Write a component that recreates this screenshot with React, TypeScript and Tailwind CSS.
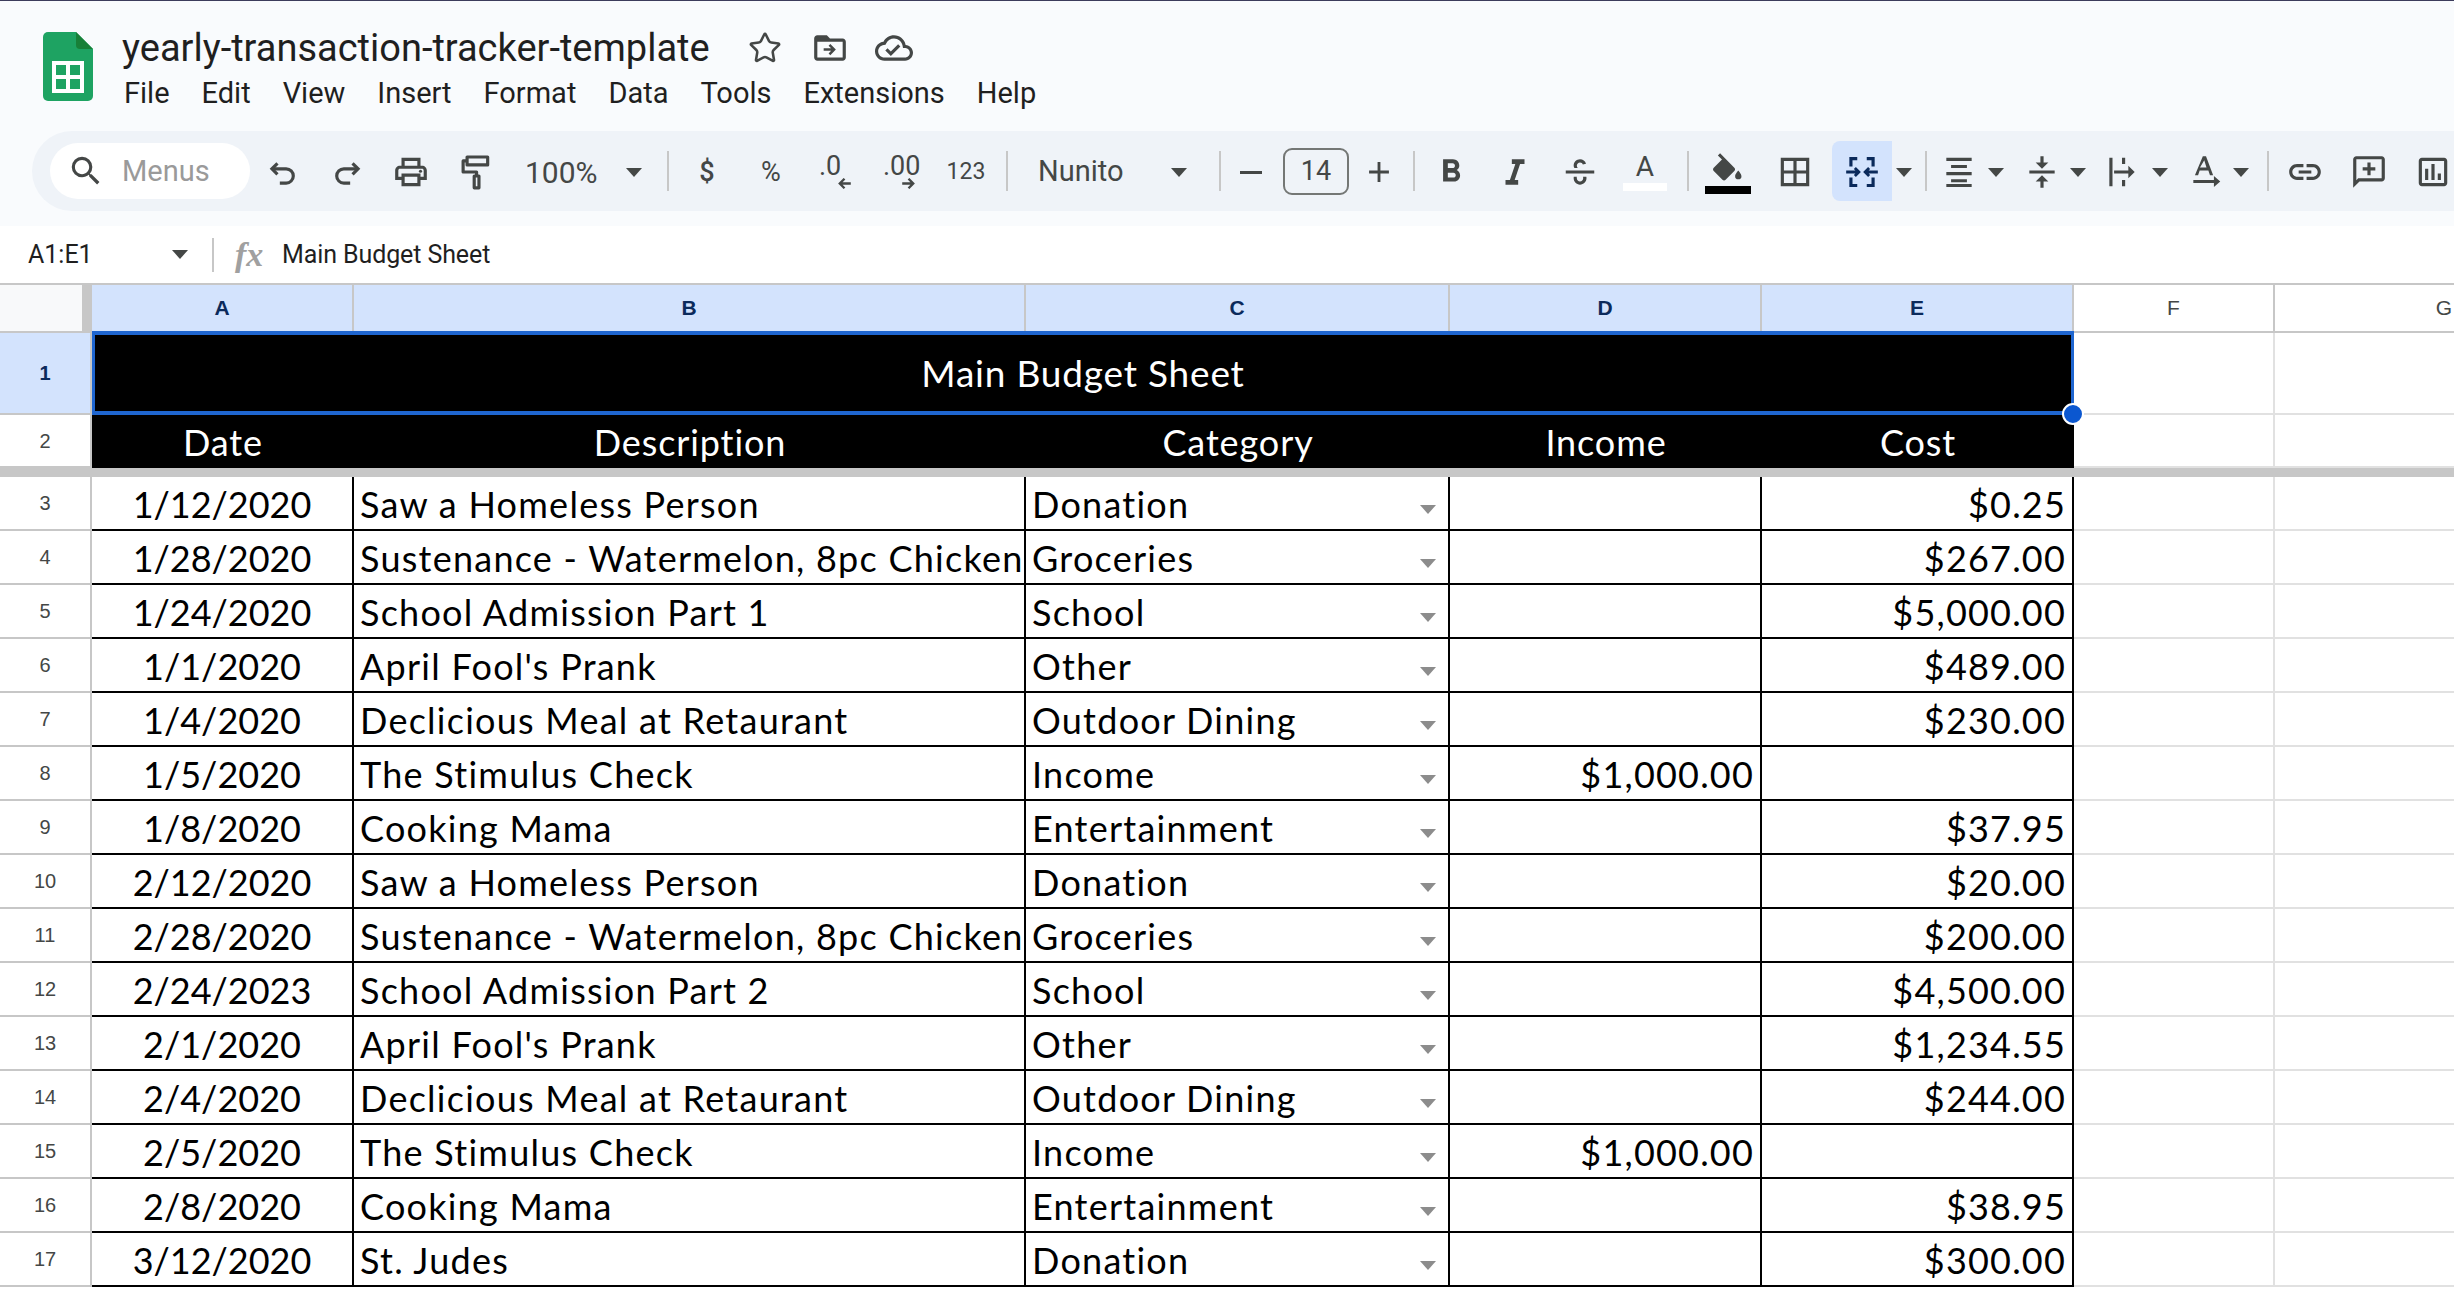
import { ReactNode } from "react";
import { Star } from "lucide-react";

const rows = [
  ["1/12/2020", "Saw a Homeless Person", "Donation", "", "$0.25"],
  ["1/28/2020", "Sustenance - Watermelon, 8pc Chicken", "Groceries", "", "$267.00"],
  ["1/24/2020", "School Admission Part 1", "School", "", "$5,000.00"],
  ["1/1/2020", "April Fool's Prank", "Other", "", "$489.00"],
  ["1/4/2020", "Declicious Meal at Retaurant", "Outdoor Dining", "", "$230.00"],
  ["1/5/2020", "The Stimulus Check", "Income", "$1,000.00", ""],
  ["1/8/2020", "Cooking Mama", "Entertainment", "", "$37.95"],
  ["2/12/2020", "Saw a Homeless Person", "Donation", "", "$20.00"],
  ["2/28/2020", "Sustenance - Watermelon, 8pc Chicken", "Groceries", "", "$200.00"],
  ["2/24/2023", "School Admission Part 2", "School", "", "$4,500.00"],
  ["2/1/2020", "April Fool's Prank", "Other", "", "$1,234.55"],
  ["2/4/2020", "Declicious Meal at Retaurant", "Outdoor Dining", "", "$244.00"],
  ["2/5/2020", "The Stimulus Check", "Income", "$1,000.00", ""],
  ["2/8/2020", "Cooking Mama", "Entertainment", "", "$38.95"],
  ["3/12/2020", "St. Judes", "Donation", "", "$300.00"],
];

const menus = ["File", "Edit", "View", "Insert", "Format", "Data", "Tools", "Extensions", "Help"];

const Icon = ({ children, className = "w-[38px] h-[38px]" }: { children: ReactNode; className?: string }) => (
  <svg viewBox="0 0 24 24" className={className} fill="#444746">
    {children}
  </svg>
);

const Caret = ({ className = "" }: { className?: string }) => (
  <svg viewBox="0 0 16 9" className={`w-4 h-[9px] shrink-0 ${className}`} fill="#444746">
    <path d="M0 0h16L8 9z" />
  </svg>
);

const Sep = ({ className = "" }: { className?: string }) => (
  <div className={`w-[2px] h-[40px] bg-[#c7c7c7] shrink-0 ${className}`} />
);

const Btn = ({ children, className = "w-16" }: { children: ReactNode; className?: string }) => (
  <div className={`h-[60px] pt-[2px] shrink-0 flex items-center justify-center text-[#444746] ${className}`}>{children}</div>
);

const Logo = () => (
  <svg viewBox="0 0 50 69" className="w-[50px] h-[69px] shrink-0">
    <path d="M5 0h28l17 17v47a5 5 0 0 1-5 5H5a5 5 0 0 1-5-5V5a5 5 0 0 1 5-5z" fill="#1ea362" />
    <path d="M33 0l17 17H37a4 4 0 0 1-4-4z" fill="#188038" />
    <path
      d="M9 29h32v32H9zm4 4v10h10V33zm14 0v10h10V33zM13 47v10h10V47zm14 0v10h10V47z"
      fill="#fff"
      fillRule="evenodd"
    />
  </svg>
);

const Toolbar = () => (
  <div className="h-20 ml-8 pl-[18px] rounded-l-[40px] bg-[#eff3f8] flex items-center w-[2500px]">
    <div className="w-[200px] h-14 rounded-full bg-white flex items-center shrink-0 pl-[17px] gap-[17px]">
      <Icon className="w-[38px] h-[38px] shrink-0">
        <path d="M15.5 14h-.79l-.28-.27A6.471 6.471 0 0 0 16 9.5 6.5 6.5 0 1 0 9.5 16c1.61 0 3.09-.59 4.23-1.57l.27.28v.79l5 4.99L20.49 19l-4.99-5zm-6 0C7.01 14 5 11.99 5 9.5S7.01 5 9.5 5 14 7.01 14 9.5 11.99 14 9.5 14z" />
      </Icon>
      <span className="text-[29px] pt-[2px] text-[#9a9a9a]">Menus</span>
    </div>
    <Btn className="w-16 ml-px">
      <Icon>
        <path d="M8.500 6.500 5 10l3.500 3.500" fill="none" stroke="#444746" strokeWidth="2" />
        <path d="M5.500 10H14a4.500 4.500 0 0 1 0 9H10" fill="none" stroke="#444746" strokeWidth="2" />
      </Icon>
    </Btn>
    <Btn>
      <Icon>
        <path d="M15.500 6.500 19 10l-3.500 3.500" fill="none" stroke="#444746" strokeWidth="2" />
        <path d="M18.500 10H10a4.500 4.500 0 0 0 0 9h4" fill="none" stroke="#444746" strokeWidth="2" />
      </Icon>
    </Btn>
    <Btn>
      <Icon>
        <path d="M19 8h-1V3H6v5H5c-1.66 0-3 1.34-3 3v6h4v4h12v-4h4v-6c0-1.66-1.34-3-3-3zM8 5h8v3H8V5zm8 12v2H8v-4h8v2zm2-2v-2H6v2H4v-4c0-.55.45-1 1-1h14c.55 0 1 .45 1 1v4h-2z" />
        <circle cx="18" cy="11.5" r="1" />
      </Icon>
    </Btn>
    <Btn>
      <Icon>
        <path
          d="M7 2.500h13v5H7zM7 5H4.500v7H13v2.500M11.500 14.500h3v7.500h-3z"
          fill="none"
          stroke="#444746"
          strokeWidth="2"
          strokeLinejoin="round"
        />
      </Icon>
    </Btn>
    <div className="w-[160px] h-[60px] pt-[2px] shrink-0 flex items-center justify-between pl-[18px] pr-[25px] text-[#444746] text-[30px]">
      <span>100%</span>
      <Caret />
    </div>
    <Sep />
    <Btn className="w-16 ml-[6px] text-[27px] font-medium">$</Btn>
    <Btn className="w-16 text-[27px]">%</Btn>
    <Btn className="w-16 ml-[2px]">
      <div className="relative w-[40px] h-[46px]">
        <span className="absolute left-[2px] top-[3px] text-[27px] leading-[28px]">.0</span>
        <svg viewBox="0 0 18 14" className="absolute right-[5px] bottom-[6px] w-[15px] h-[11px]" fill="none" stroke="#444746" strokeWidth="3">
          <path d="M17 7H3M9 1 3 7l6 6" />
        </svg>
      </div>
    </Btn>
    <Btn>
      <div className="relative w-[40px] h-[46px]">
        <span className="absolute left-[2px] top-[3px] text-[27px] leading-[28px]">.00</span>
        <svg viewBox="0 0 18 14" className="absolute right-[5px] bottom-[6px] w-[15px] h-[11px]" fill="none" stroke="#444746" strokeWidth="3">
          <path d="M1 7h14M9 1l6 6-6 6" />
        </svg>
      </div>
    </Btn>
    <Btn className="w-16 ml-px text-[23px]">123</Btn>
    <Sep className="ml-2" />
    <div className="w-[211px] h-[60px] pt-[2px] shrink-0 flex items-center justify-between pl-[30px] pr-8 text-[#444746] text-[29px]">
      <span>Nunito</span>
      <Caret />
    </div>
    <Sep />
    <Btn className="w-[60px]">
      <div className="w-[22px] h-[3px] bg-[#444746]" />
    </Btn>
    <div className="ml-[2px] w-[66px] h-[47px] shrink-0 rounded-[9px] border-2 border-[#747775] flex items-center justify-center text-[27px] text-[#444746]">
      14
    </div>
    <Btn className="w-[60px]">
      <Icon className="w-[34px] h-[34px]">
        <path d="M19 13h-6v6h-2v-6H5v-2h6V5h2v6h6z" />
      </Icon>
    </Btn>
    <Sep className="ml-1" />
    <Btn className="w-16 ml-1">
      <Icon>
        <path d="M15.6 10.79c.97-.67 1.65-1.77 1.65-2.79 0-2.26-1.75-4-4-4H7v14h7.04c2.09 0 3.71-1.7 3.71-3.79 0-1.52-.86-2.82-2.15-3.42zM10 6.5h3c.83 0 1.5.67 1.5 1.5s-.67 1.5-1.5 1.5h-3v-3zm3.5 9H10v-3h3.5c.83 0 1.5.67 1.5 1.5s-.67 1.5-1.5 1.5z" />
      </Icon>
    </Btn>
    <Btn>
      <Icon>
        <path d="M10 4v3h2.21l-3.42 10H6v3h8v-3h-2.21l3.42-10H18V4z" />
      </Icon>
    </Btn>
    <Btn className="w-16 ml-px">
      <Icon>
        <path d="M3 11h18v2H3zM8.5 9.5C8.2 9 8 8.500 8 8c0-2.200 1.800-4 4-4 1.800 0 3.300 1.100 3.800 2.800l-2 .5C13.600 6.500 12.900 6 12 6c-1.100 0-2 .9-2 2 0 .5.2 1 .6 1.500zM10 15c-.1.3-.1.6 0 1 0 1.100.9 2 2 2s2-.9 2-2c0-.4 0-.7-.1-1H16c.1.3.1.7.1 1 0 2.200-1.900 4-4.100 4s-4-1.800-4-4c0-.3 0-.7.1-1z" />
      </Icon>
    </Btn>
    <Btn className="w-16 ml-px">
      <div className="flex flex-col items-center gap-[2px]">
        <span className="text-[28px] leading-[28px]">A</span>
        <div className="w-[44px] h-2 bg-white" />
      </div>
    </Btn>
    <Sep className="ml-[10px]" />
    <Btn className="w-16 ml-[7px]">
      <div className="flex flex-col items-center">
        <Icon className="w-[38px] h-[38px] -mb-[2px]">
          <path d="M7 2 5.600 3.400 8.200 6 3 11.200c-.6.6-.6 1.500 0 2.100l5.500 5.500c.3.3.7.4 1 .4s.8-.1 1-.4l5.500-5.500c.6-.6.6-1.500 0-2.100zM18.500 13s-2 2.200-2 3.500a2 2 0 0 0 4 0c0-1.300-2-3.500-2-3.500z" />
        </Icon>
        <div className="w-[46px] h-2 bg-black" />
      </div>
    </Btn>
    <Btn className="w-16 ml-[3px]">
      <Icon>
        <path d="M3 3v18h18V3zm8 16H5v-6h6zm0-8H5V5h6zm8 8h-6v-6h6zm0-8h-6V5h6z" />
      </Icon>
    </Btn>
    <div className="ml-[5px] w-[60px] h-[60px] pt-[2px] shrink-0 rounded-l-[8px] bg-[#d3e3fd] flex items-center justify-center">
      <Icon>
        <path d="M9 3.500H5v5M9 20.500H5v-5M15 3.500h4v5M15 20.500h4v-5" fill="none" stroke="#0b2a5b" strokeWidth="2" />
        <path d="M2 12h8M7.500 9.500 10 12l-2.500 2.500M22 12h-8M16.500 9.500 14 12l2.500 2.500" fill="none" stroke="#0b2a5b" strokeWidth="1.800" />
      </Icon>
    </div>
    <Btn className="w-6">
      <Caret />
    </Btn>
    <Sep className="ml-[9px]" />
    <Btn className="w-[52px] ml-[6px]">
      <Icon>
        <path d="M4 3h16v2H4zM7 7.500h10v2H7zM4 12h16v2H4zM7 16.500h10v2H7zM4 19.500h16v2H4z" />
      </Icon>
    </Btn>
    <Btn className="w-[22px]">
      <Caret />
    </Btn>
    <Btn className="w-[52px] ml-[9px]">
      <Icon>
        <path d="M4 11h16v2H4zM11 2h2v4h3l-4 4-4-4h3zM12 14l4 4h-3v4h-2v-4H8z" />
      </Icon>
    </Btn>
    <Btn className="w-5">
      <Caret />
    </Btn>
    <Btn className="w-[52px] ml-2">
      <Icon>
        <path d="M4 3h2v18H4zM12 3h2v4h-2zM12 17h2v4h-2zM7 11h9V8l4 4-4 4v-3H7z" />
      </Icon>
    </Btn>
    <Btn className="w-6">
      <Caret />
    </Btn>
    <Btn className="w-[52px] ml-2">
      <Icon>
        <path d="M10 2h2l4.500 12h-2l-1-3h-5.500l-1 3h-2zm-1.800 7.200h4.100L10.900 4.500zM4 17h13v-2.500l4 3.500-4 3.500V19H4z" />
      </Icon>
    </Btn>
    <Btn className="w-[18px]">
      <Caret />
    </Btn>
    <Sep className="ml-[17px]" />
    <Btn className="w-16 ml-1">
      <Icon>
        <path d="M17 7h-4v2h4c1.650 0 3 1.350 3 3s-1.350 3-3 3h-4v2h4c2.760 0 5-2.240 5-5s-2.240-5-5-5zm-6 8H7c-1.650 0-3-1.350-3-3s1.350-3 3-3h4V7H7c-2.760 0-5 2.240-5 5s2.240 5 5 5h4v-2zm-3-4h8v2H8z" />
      </Icon>
    </Btn>
    <Btn>
      <Icon>
        <path d="M20 2H4c-1.100 0-2 .9-2 2v18l4-4h14c1.100 0 2-.9 2-2V4c0-1.100-.9-2-2-2zm0 14H5.170L4 17.170V4h16v12zM11 6h2v3h3v2h-3v3h-2v-3H8V9h3z" />
      </Icon>
    </Btn>
    <Btn>
      <Icon>
        <path d="M19 3H5c-1.100 0-2 .9-2 2v14c0 1.100.9 2 2 2h14c1.100 0 2-.9 2-2V5c0-1.100-.9-2-2-2zm0 16H5V5h14v14zM7 10h2v7H7zm4-3h2v10h-2zm4 6h2v4h-2z" />
      </Icon>
    </Btn>
  </div>
);

const dataText = "pt-[2px] text-[36px] text-black [font-family:Lato,sans-serif]";
const colHead = "h-full shrink-0 flex items-center justify-center border-r-2 border-[#c7c7c7] text-[21px] font-bold text-[#0b2a5b] [font-family:'Liberation_Sans',sans-serif]";
const blankHead = "h-full shrink-0 flex items-center justify-center border-r-2 border-[#c7c7c7] text-[21px] text-[#444746] [font-family:'Liberation_Sans',sans-serif]";
const rowHead = "w-[92px] h-full shrink-0 flex items-center justify-center bg-white border-r-2 border-b-2 border-[#c7c7c7] text-[20px] text-[#444746] [font-family:'Liberation_Sans',sans-serif]";

const OuterCells = () => (
  <>
    <div className="w-[201px] h-full shrink-0 border-r-2 border-b-2 border-[#e1e1e1]" />
    <div className="flex-1 h-full border-b-2 border-[#e1e1e1]" />
  </>
);

const App = () => {
  return (
    <div className="w-[2454px] h-[1292px] overflow-hidden bg-white flex flex-col [font-family:Roboto,sans-serif]">
      <div className="h-[226px] shrink-0 bg-[#f9fbfd] border-t border-[#3c3c5c] flex flex-col">
        <div className="h-[130px] shrink-0 flex items-start pl-[43px] pt-[31px] gap-[29px]">
          <Logo />
          <div className="flex flex-col">
            <div className="flex items-center h-[36px] -mt-[2px]">
              <span className="text-[38px] leading-[36px] text-[#1f1f1f] w-[626px] whitespace-nowrap">
                yearly-transaction-tracker-template
              </span>
              <Star className="w-[34px] h-[34px] text-[#444746] shrink-0" strokeWidth={1.8} />
              <div className="ml-[29px]">
                <Icon>
                  <path d="M20 6h-8l-2-2H4c-1.100 0-2 .9-2 2v12c0 1.100.9 2 2 2h16c1.100 0 2-.9 2-2V8c0-1.100-.9-2-2-2zm0 12H4V8h16v10zM12.200 9.500l3.500 3.500-3.500 3.500-1.100-1.100 1.600-1.600H8v-1.600h4.700l-1.600-1.600z" />
                </Icon>
              </div>
              <div className="ml-[26px]">
                <Icon>
                  <path d="M19.350 10.040C18.670 6.590 15.640 4 12 4 9.110 4 6.600 5.640 5.350 8.040 2.340 8.360 0 10.910 0 14c0 3.310 2.690 6 6 6h13c2.760 0 5-2.240 5-5 0-2.640-2.050-4.780-4.650-4.960zM19 18H6c-2.210 0-4-1.790-4-4 0-2.050 1.530-3.760 3.560-3.970l1.070-.11.5-.95C8.080 7.140 9.940 6 12 6c2.620 0 4.880 1.860 5.390 4.430l.3 1.500 1.530.11c1.560.1 2.780 1.410 2.780 2.960 0 1.650-1.350 3-3 3zm-9-3.820l-2.090-2.090L6.500 13.500 10 17l6.010-6.010-1.410-1.410z" />
                </Icon>
              </div>
            </div>
            <div className="flex items-center gap-[32px] mt-[10px] pl-[2px] text-[29px] leading-[34px] text-[#1f1f1f]">
              {menus.map((m) => (
                <span key={m}>{m}</span>
              ))}
            </div>
          </div>
        </div>
        <Toolbar />
      </div>

      {/* formula bar */}
      <div className="h-[59px] shrink-0 bg-white flex items-center border-b-2 border-[#c7c7c7]">
        <div className="w-[212px] pl-7 pr-6 flex items-center justify-between text-[25px] text-[#1f1f1f] shrink-0">
          <span>A1:E1</span>
          <Caret />
        </div>
        <div className="w-[2px] h-[34px] bg-[#c7c7c7] shrink-0" />
        <span className="ml-[21px] w-[47px] text-[34px] leading-none italic font-bold text-[#a0a0a0] [font-family:'Liberation_Serif',serif]">
          fx
        </span>
        <span className="text-[25px] tracking-[-0.1px] text-[#1f1f1f]">Main Budget Sheet</span>
      </div>

      {/* column headers */}
      <div className="h-[48px] shrink-0 flex border-b-2 border-[#c7c7c7] overflow-hidden">
        <div className="w-[92px] h-full shrink-0 bg-[#f8f9fa] border-r-[10px] border-[#c7c7c7]" />
        <div className={`w-[262px] bg-[#d3e3fd] ${colHead}`}>A</div>
        <div className={`w-[672px] bg-[#d3e3fd] ${colHead}`}>B</div>
        <div className={`w-[424px] bg-[#d3e3fd] ${colHead}`}>C</div>
        <div className={`w-[312px] bg-[#d3e3fd] ${colHead}`}>D</div>
        <div className={`w-[312px] bg-[#d3e3fd] ${colHead}`}>E</div>
        <div className={`w-[201px] ${blankHead}`}>F</div>
        <div className={`w-[340px] ${blankHead}`}>G</div>
      </div>

      {/* row 1 */}
      <div className="h-[82px] shrink-0 flex">
        <div className="w-[92px] h-full shrink-0 flex items-center justify-center bg-[#d3e3fd] border-r-2 border-b-2 border-[#c7c7c7] text-[20px] font-bold text-[#0b2a5b] [font-family:'Liberation_Sans',sans-serif]">
          1
        </div>
        <div className="relative z-10 w-[1982px] h-[84px] shrink-0 bg-black border-y-4 border-x-[3px] border-[#1f66d0] -mt-[2px] flex items-center justify-center text-white text-[37px] tracking-[0.8px] [font-family:Lato,sans-serif]">
          Main Budget Sheet
          <div className="absolute -right-[13px] -bottom-[14px] w-[22px] h-[22px] rounded-full bg-[#0b57d0] border-2 border-white" />
        </div>
        <OuterCells />
      </div>

      {/* row 2 */}
      <div className="h-[53px] shrink-0 flex">
        <div className={rowHead}>2</div>
        <div className="w-[1982px] h-full shrink-0 bg-black flex items-center text-white text-[36px] tracking-[0.9px] [font-family:Lato,sans-serif]">
          <div className="w-[262px] text-center">Date</div>
          <div className="w-[672px] text-center">Description</div>
          <div className="w-[424px] text-center">Category</div>
          <div className="w-[312px] text-center">Income</div>
          <div className="w-[312px] text-center">Cost</div>
        </div>
        <OuterCells />
      </div>
      <div className="h-[9px] shrink-0 bg-[#c7c7c7]" />

      {/* data rows */}
      {rows.map((r, i) => (
        <div key={i} className="h-[54px] shrink-0 flex">
          <div className={rowHead}>{i + 3}</div>
          <div className={`w-[262px] h-full shrink-0 flex items-center justify-center border-r-2 border-b-2 border-black ${dataText}`}>
            {r[0]}
          </div>
          <div className={`w-[672px] h-full shrink-0 flex items-center pl-[6px] tracking-[1.25px] whitespace-nowrap overflow-hidden border-r-2 border-b-2 border-black ${dataText}`}>
            {r[1]}
          </div>
          <div className={`relative w-[424px] h-full shrink-0 flex items-center pl-[6px] tracking-[1.25px] border-r-2 border-b-2 border-black ${dataText}`}>
            {r[2]}
            <svg viewBox="0 0 16 9" className="absolute right-[12px] bottom-[15px] w-4 h-[9px]" fill="#8c8c8c">
              <path d="M0 0h16L8 9z" />
            </svg>
          </div>
          <div className={`w-[312px] h-full shrink-0 flex items-center justify-end pr-[6px] tracking-[1.2px] border-r-2 border-b-2 border-black ${dataText}`}>
            {r[3]}
          </div>
          <div className={`w-[312px] h-full shrink-0 flex items-center justify-end pr-[6px] tracking-[1.2px] border-r-2 border-b-2 border-black ${dataText}`}>
            {r[4]}
          </div>
          <OuterCells />
        </div>
      ))}
    </div>
  );
};

export default App;
